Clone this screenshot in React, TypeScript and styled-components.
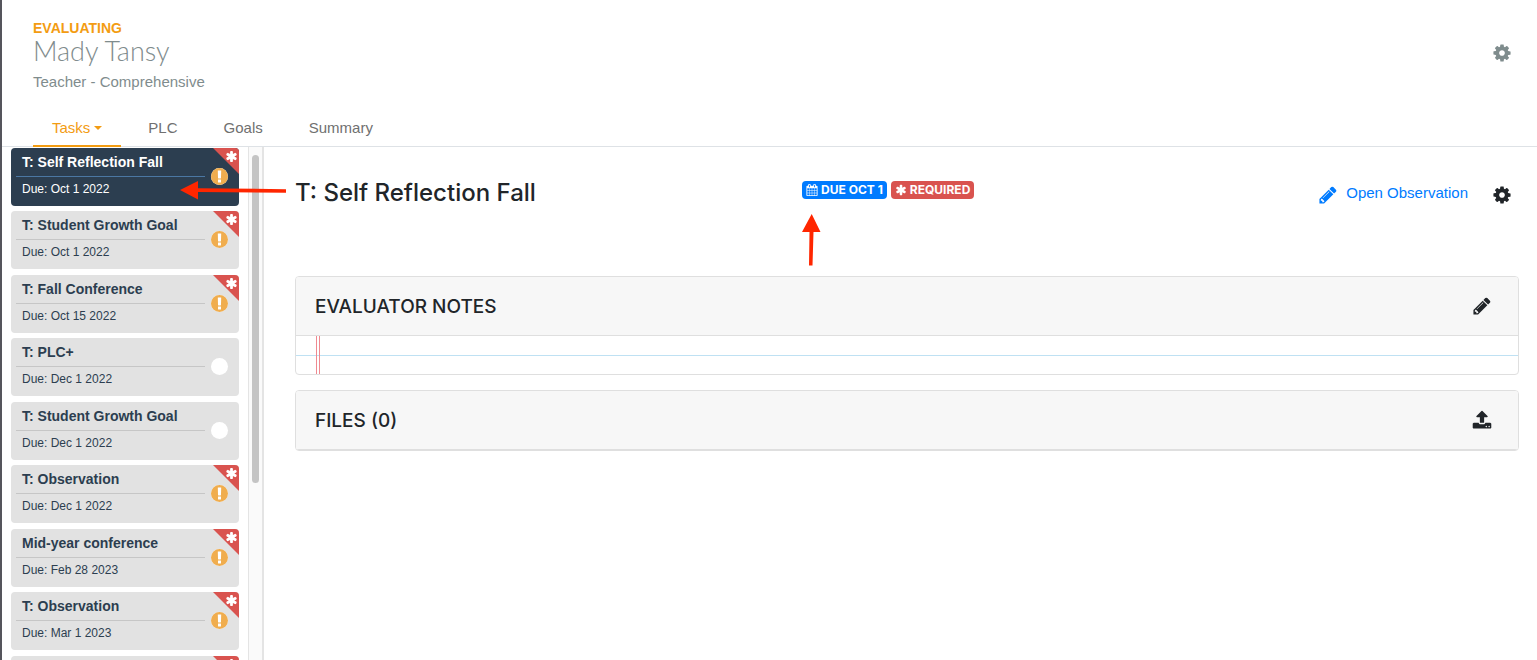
import React from 'react';
import styled, { createGlobalStyle, css } from 'styled-components';

const GlobalStyle = createGlobalStyle`
  *, *::before, *::after { box-sizing: border-box; }
  body {
    margin: 0;
    background: #fff;
    color: #212529;
    font-family: "Liberation Sans", Helvetica, Arial, sans-serif;
    font-size: 15px;
    line-height: 20px;
  }
  button { font: inherit; color: inherit; background: none; border: 0; padding: 0; cursor: pointer; }
  a { text-decoration: none; }
  h1, h2, h3, p, ul { margin: 0; padding: 0; }
`;

const icons = {
  cog: 'M1152 896q0-106-75-181t-181-75-181 75-75 181 75 181 181 75 181-75 75-181zm512-109v222q0 12-8 23t-20 13l-185 28q-19 54-39 91 35 50 107 138 10 12 10 25t-9 23q-27 37-99 108t-94 71q-12 0-26-9l-138-108q-44 23-91 38-16 136-29 186-7 28-36 28h-222q-14 0-24.500-8.500t-11.500-21.500l-28-184q-49-16-90-37l-141 107q-10 9-25 9-14 0-25-11-126-114-165-168-7-10-7-23 0-12 8-23 15-21 51-66.500t54-70.500q-27-50-41-99l-183-27q-13-2-21-12.500t-8-23.500v-222q0-12 8-23t19-13l186-28q14-46 39-92-40-57-107-138-10-12-10-24 0-10 9-23 26-36 98.500-107.500t94.500-71.500q13 0 26 10l138 107q44-23 91-38 16-136 29-186 7-28 36-28h222q14 0 24.500 8.500t11.500 21.500l28 184q49 16 90 37l142-107q9-9 24-9 13 0 25 10 129 119 165 170 7 8 7 22 0 12-8 23-15 21-51 66.500t-54 70.500q26 50 41 98l183 28q13 2 21 12.500t8 23.500z',
  pencil: 'M491 1536l91-91-235-235-91 91v107h128v128h107zm523-928q0-22-22-22-10 0-17 7l-542 542q-7 7-7 17 0 22 22 22 10 0 17-7l542-542q7-7 7-17zm-54-192l416 416-832 832h-416v-416zm683 96q0 53-37 90l-166 166-416-416 166-165q36-38 90-38 53 0 91 38l235 234q37 39 37 91z',
  asterisk: 'M1546 1050q46 26 59.500 77.500t-12.500 97.500l-64 110q-26 46-77.500 59.500t-97.500-12.500l-266-153v307q0 52-38 90t-90 38h-128q-52 0-90-38t-38-90v-307l-266 153q-46 26-97.500 12.500t-77.500-59.500l-64-110q-26-46-12.500-97.500t59.500-77.500l266-154-266-154q-46-26-59.500-77.500t12.500-97.500l64-110q26-46 77.500-59.500t97.500 12.500l266 153v-307q0-52 38-90t90-38h128q52 0 90 38t38 90v307l266-153q46-26 97.500-12.500t77.500 59.500l64 110q26 46 12.500 97.500t-59.500 77.500l-266 154z',
  alert: 'M896 128q209 0 385.500 103t279.500 279.500 103 385.500-103 385.500-279.500 279.500-385.500 103-385.500-103-279.500-279.500-103-385.500 103-385.500 279.500-279.500 385.500-103zm128 1247v-190q0-14-9-23.500t-22-9.500h-192q-13 0-23 10t-10 23v190q0 13 10 23t23 10h192q13 0 22-9.500t9-23.500zm-2-344l18-621q0-12-10-18-10-8-24-8h-220q-14 0-24 8-10 6-10 18l17 621q0 10 10 17.500t24 7.500h185q14 0 23.500-7.500t10.500-17.500z',
  calendar: 'M192 1664h288v-288h-288v288zm352 0h320v-288h-320v288zm-352-352h288v-320h-288v320zm352 0h320v-320h-320v320zm-352-384h288v-288h-288v288zm736 736h320v-288h-320v288zm-384-736h320v-288h-320v288zm768 736h288v-288h-288v288zm-384-352h320v-320h-320v320zm-352-864v-288q0-13-9.500-22.500t-22.500-9.500h-64q-13 0-22.500 9.500t-9.500 22.500v288q0 13 9.500 22.500t22.500 9.500h64q13 0 22.500-9.500t9.500-22.500zm736 864h288v-320h-288v320zm-384-384h320v-288h-320v288zm384 0h288v-288h-288v288zm32-480v-288q0-13-9.500-22.500t-22.500-9.500h-64q-13 0-22.500 9.500t-9.500 22.500v288q0 13 9.500 22.500t22.500 9.500h64q13 0 22.500-9.500t9.500-22.500zm384-64v1280q0 52-38 90t-90 38h-1408q-52 0-90-38t-38-90v-1280q0-52 38-90t90-38h128v-96q0-66 47-113t113-47h64q66 0 113 47t47 113v96h384v-96q0-66 47-113t113-47h64q66 0 113 47t47 113v96h128q52 0 90 38t38 90z',
  upload: 'M1344 1472q0-26-19-45t-45-19-45 19-19 45 19 45 45 19 45-19 19-45zm256 0q0-26-19-45t-45-19-45 19-19 45 19 45 45 19 45-19 19-45zm128-224v320q0 40-28 68t-68 28h-1472q-40 0-68-28t-28-68v-320q0-40 28-68t68-28h427q21 56 70.500 92t110.500 36h256q61 0 110.500-36t70.500-92h427q40 0 68 28t28 68zm-325-648q-17 40-59 40h-256v448q0 26-19 45t-45 19h-256q-26 0-45-19t-19-45v-448h-256q-42 0-59-40-17-39 14-69l448-448q18-19 45-19t45 19l448 448q31 30 14 69z',
};

const Icon = ({ name, size }: { name: keyof typeof icons; size: number }) => (
  <svg width={size} height={size} viewBox="0 0 1792 1792" fill="currentColor" aria-hidden="true">
    <path d={icons[name]} />
  </svg>
);

const Page = styled.div`
  position: relative;
  display: flex;
  flex-direction: column;
  height: 100vh;
  overflow: hidden;
  border-left: 2px solid #55555c;
`;

const Header = styled.header`
  display: flex;
  justify-content: space-between;
  align-items: flex-start;
  padding: 18px 25px 0 31px;
  color: #7f8c8d;
`;

const Eyebrow = styled.p`
  color: #f39c12;
  font-size: 14px;
  font-weight: 700;
`;

const PersonName = styled.h1`
  font-family: Lato, "Liberation Sans", sans-serif;
  font-size: 27px;
  font-weight: 300;
  line-height: 26px;
`;

const Role = styled.p`
  margin-top: 8px;
`;

const IconButton = styled.button`
  display: flex;
`;

const HeaderTools = styled.div`
  padding-top: 25px;
`;

const Tabs = styled.nav`
  display: flex;
  gap: 8px;
  margin-top: 18px;
  padding-left: 31px;
  border-bottom: 1px solid #dee2e6;
`;

const Tab = styled.a<{ $active?: boolean }>`
  display: flex;
  align-items: center;
  gap: 4px;
  height: 37px;
  margin-bottom: -1px;
  padding: 0 19px;
  color: ${(p) => (p.$active ? '#f39c12' : '#707070')};
  border-bottom: 2px solid ${(p) => (p.$active ? '#f39c12' : 'transparent')};
`;

const Caret = styled.span`
  border: 4px solid transparent;
  border-top-color: currentColor;
  border-bottom: 0;
`;

const Body = styled.div`
  display: flex;
  flex: 1;
  min-height: 0;
`;

const Sidebar = styled.aside`
  display: flex;
  flex: none;
  width: 262px;
  overflow: hidden;
`;

const TaskList = styled.ul`
  flex: 1;
  padding: 1px 9px 0;
  list-style: none;
`;

const TaskItem = styled.li`
  margin-bottom: 5px;
  &:nth-child(even) { margin-bottom: 6px; }
`;

const TaskCard = styled.a<{ $active?: boolean }>`
  position: relative;
  display: block;
  height: 58px;
  padding: 4px 34px 0 5px;
  overflow: hidden;
  border-radius: 4px;
  background: #e2e2e2;
  color: #2c3e50;
  ${(p) => p.$active && css`
    background: #2c3e50;
    color: #fff;
  `}
`;

const TaskTitle = styled.h3<{ $active?: boolean }>`
  height: 25px;
  padding-left: 6px;
  border-bottom: 1px solid ${(p) => (p.$active ? '#4b77a3' : '#c6c6c6')};
  font-size: 14px;
  font-weight: 700;
  line-height: 21px;
`;

const TaskDue = styled.p`
  padding: 2px 0 0 6px;
  font-size: 12px;
`;

const Corner = styled.span`
  position: absolute;
  top: 0;
  right: 0;
  display: flex;
  justify-content: flex-end;
  width: 26px;
  height: 26px;
  padding: 2px 1px 0 0;
  background: #d9534f;
  clip-path: polygon(0 0, 100% 0, 100% 100%);
  color: #fff;
`;

const Status = styled.span`
  position: absolute;
  top: 20px;
  right: 11px;
  display: flex;
  align-items: center;
  justify-content: center;
  width: 17px;
  height: 17px;
  overflow: hidden;
  border-radius: 50%;
  background: #fff;
  color: #f0ad4e;
  svg { flex: none; }
`;

const ScrollTrack = styled.div`
  width: 16px;
  padding: 8px 3px 0;
  border: solid #e4e4e4;
  border-width: 0 2px 0 1px;
  background: #fafafa;
`;

const ScrollThumb = styled.div`
  height: 65%;
  border-radius: 4px;
  background: #c4c4c4;
`;

const Main = styled.main`
  flex: 1;
  min-width: 0;
  padding: 30px 18px 0 31px;
`;

const TitleRow = styled.div`
  display: grid;
  grid-template-columns: 29fr 41fr;
  margin-bottom: 67px;
`;

const TaskHeading = styled.h2`
  font-family: Inter, "Liberation Sans", sans-serif;
  font-size: 24px;
  font-weight: 500;
  line-height: 32px;
`;

const TitleMeta = styled.div`
  display: flex;
  align-items: flex-start;
  justify-content: space-between;
  padding-top: 4px;
`;

const Badges = styled.div`
  display: flex;
  gap: 4px;
`;

const Badge = styled.span<{ $tone: string }>`
  display: flex;
  align-items: center;
  gap: 3px;
  height: 18px;
  padding: 0 4px;
  border-radius: 4px;
  background: ${(p) => p.$tone};
  color: #fff;
  font-family: Inter, "Liberation Sans", sans-serif;
  font-size: 12px;
  font-weight: 700;
`;

const Actions = styled.div`
  display: flex;
  align-items: flex-start;
  gap: 24px;
  padding: 2px 7px 0 0;
  svg { margin-top: 2px; }
`;

const OpenLink = styled.a`
  display: flex;
  align-items: flex-start;
  gap: 8px;
  color: #007bff;
`;

const Panel = styled.section`
  margin-bottom: 15px;
  border: 1px solid #dfdfdf;
  border-radius: 4px;
  overflow: hidden;
`;

const PanelHeader = styled.header`
  display: flex;
  align-items: center;
  justify-content: space-between;
  height: 59px;
  padding: 0 26px 0 19px;
  border-bottom: 1px solid #dfdfdf;
  background: #f7f7f7;
`;

const PanelTitle = styled.h3`
  padding-top: 2px;
  font-family: Inter, "Liberation Sans", sans-serif;
  font-size: 19px;
  font-weight: 500;
`;

const Paper = styled.div`
  height: 38px;
  background:
    linear-gradient(#ef8a91, #ef8a91) 20px 0 / 1px 100% no-repeat,
    linear-gradient(#ef8a91, #ef8a91) 23px 0 / 1px 100% no-repeat,
    linear-gradient(#bfe1f3, #bfe1f3) 0 19px / 100% 1px no-repeat;
`;

const Arrow = styled.svg<{ $x: number; $y: number }>`
  position: absolute;
  left: ${(p) => p.$x}px;
  top: ${(p) => p.$y}px;
  fill: #ff2600;
  pointer-events: none;
`;

type Task = { title: string; due: string; required: boolean; active?: boolean };

const tasks: Task[] = [
  { title: 'T: Self Reflection Fall', due: 'Oct 1 2022', required: true, active: true },
  { title: 'T: Student Growth Goal', due: 'Oct 1 2022', required: true },
  { title: 'T: Fall Conference', due: 'Oct 15 2022', required: true },
  { title: 'T: PLC+', due: 'Dec 1 2022', required: false },
  { title: 'T: Student Growth Goal', due: 'Dec 1 2022', required: false },
  { title: 'T: Observation', due: 'Dec 1 2022', required: true },
  { title: 'Mid-year conference', due: 'Feb 28 2023', required: true },
  { title: 'T: Observation', due: 'Mar 1 2023', required: true },
];

export default function App() {
  return (
    <>
      <GlobalStyle />
      <Page>
        <Header>
          <div>
            <Eyebrow>EVALUATING</Eyebrow>
            <PersonName>Mady Tansy</PersonName>
            <Role>Teacher - Comprehensive</Role>
          </div>
          <HeaderTools>
            <IconButton aria-label="Evaluation settings"><Icon name="cog" size={20} /></IconButton>
          </HeaderTools>
        </Header>
        <Tabs>
          <Tab href="#tasks" $active>Tasks<Caret /></Tab>
          <Tab href="#plc">PLC</Tab>
          <Tab href="#goals">Goals</Tab>
          <Tab href="#summary">Summary</Tab>
        </Tabs>
        <Body>
          <Sidebar>
            <TaskList>
              {tasks.map((task, i) => (
                <TaskItem key={i}>
                  <TaskCard href={`#task-${i}`} $active={task.active}>
                    <TaskTitle $active={task.active}>{task.title}</TaskTitle>
                    <TaskDue>Due: {task.due}</TaskDue>
                    {task.required && <Corner><Icon name="asterisk" size={13} /></Corner>}
                    <Status>{task.required && <Icon name="alert" size={21} />}</Status>
                  </TaskCard>
                </TaskItem>
              ))}
              <TaskItem>
                <TaskCard href="#task-next" aria-label="Next task">
                  <Corner><Icon name="asterisk" size={13} /></Corner>
                </TaskCard>
              </TaskItem>
            </TaskList>
            <ScrollTrack><ScrollThumb /></ScrollTrack>
          </Sidebar>
          <Main>
            <TitleRow>
              <TaskHeading>T: Self Reflection Fall</TaskHeading>
              <TitleMeta>
                <Badges>
                  <Badge $tone="#007bff"><Icon name="calendar" size={12} />DUE OCT 1</Badge>
                  <Badge $tone="#d9534f"><Icon name="asterisk" size={12} />REQUIRED</Badge>
                </Badges>
                <Actions>
                  <OpenLink href="#observation"><Icon name="pencil" size={20} />Open Observation</OpenLink>
                  <IconButton aria-label="Task settings"><Icon name="cog" size={20} /></IconButton>
                </Actions>
              </TitleMeta>
            </TitleRow>
            <Panel>
              <PanelHeader>
                <PanelTitle>EVALUATOR NOTES</PanelTitle>
                <IconButton aria-label="Edit notes"><Icon name="pencil" size={20} /></IconButton>
              </PanelHeader>
              <Paper />
            </Panel>
            <Panel>
              <PanelHeader>
                <PanelTitle>FILES (0)</PanelTitle>
                <IconButton aria-label="Upload file"><Icon name="upload" size={20} /></IconButton>
              </PanelHeader>
            </Panel>
          </Main>
        </Body>
        <Arrow $x={178} $y={181} width="107" height="19" viewBox="0 0 107 19" aria-hidden="true">
          <path d="M0 9 18 0v7.200L106 8.200v3.600L18 11v7.500z" />
        </Arrow>
        <Arrow $x={800} $y={214} width="19" height="52" viewBox="0 0 19 52" aria-hidden="true">
          <path d="M9.700 0 18.500 18H11.500L10.500 51.500H7L7.500 18H0z" />
        </Arrow>
      </Page>
    </>
  );
}
